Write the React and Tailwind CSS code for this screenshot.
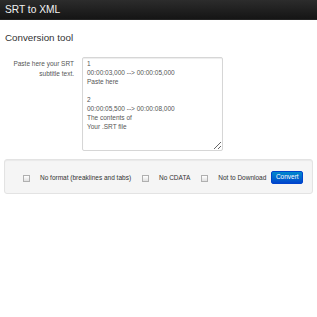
import React from 'react'

const srt = `1
00:00:03,000 --> 00:00:05,000
Paste here

2
00:00:05,500 --> 00:00:08,000
The contents of
Your .SRT file`

const Box = ({ className }) => (
    <span className={`block w-[7px] h-[7px] border border-[#b0b0b0] bg-gradient-to-b from-[#fff] to-[#e0e0e0] ${className}`} />
)

export default function App() {
    return (
        <div className="w-[317px] h-[317px] bg-white font-['Liberation_Sans',Arial,sans-serif] text-[#333] overflow-hidden">
            <div className="h-[20px] bg-gradient-to-b from-[#2c2c2c] to-[#151515] border-b border-[#252525] flex items-center px-[5px] text-[10.2px] text-[#f2f2f2]">
                SRT to XML
            </div>
            <div className="px-[4px]">
                <h2 className="mt-[12px] pl-[1px] text-[9.8px] leading-[12px] text-[#333]">Conversion tool</h2>
                <div className="flex mt-[13px]">
                    <label className="w-[70px] pt-[2px] text-right text-[6.5px] leading-[10px] text-[#555]">
                        Paste here your SRT<br />subtitle text.
                    </label>
                    <textarea
                        defaultValue={srt}
                        className="ml-[8px] w-[141px] h-[94px] border border-[#d6d6d6] rounded-[2px] px-[4px] pt-[1px] text-[6.5px] leading-[9px] text-[#555] shadow-[inset_0_1px_1px_rgba(0,0,0,0.075)] outline-none"
                    />
                </div>
                <div className="mt-[8px] w-[309px] h-[35px] bg-[#f5f5f5] border border-[#e3e3e3] rounded-[3px] shadow-[inset_0_1px_1px_rgba(0,0,0,0.05)] flex items-center text-[6.5px] text-[#333]">
                    <Box className="ml-[18px] mt-[3px]" />
                    <span className="ml-[10px] mt-[3px]">No format (breaklines and tabs)</span>
                    <Box className="ml-[11px] mt-[3px]" />
                    <span className="ml-[10px] mt-[3px]">No CDATA</span>
                    <Box className="ml-[11px] mt-[3px]" />
                    <span className="ml-[10px] mt-[3px]">Not to Download</span>
                    <button className="ml-[5px] mt-[1px] w-[32px] h-[13px] rounded-[2px] bg-gradient-to-b from-[#0088cc] to-[#0044cc] border border-[#0044cc] text-white text-[6.5px] leading-none">
                        Convert
                    </button>
                </div>
            </div>
        </div>
    )
}
